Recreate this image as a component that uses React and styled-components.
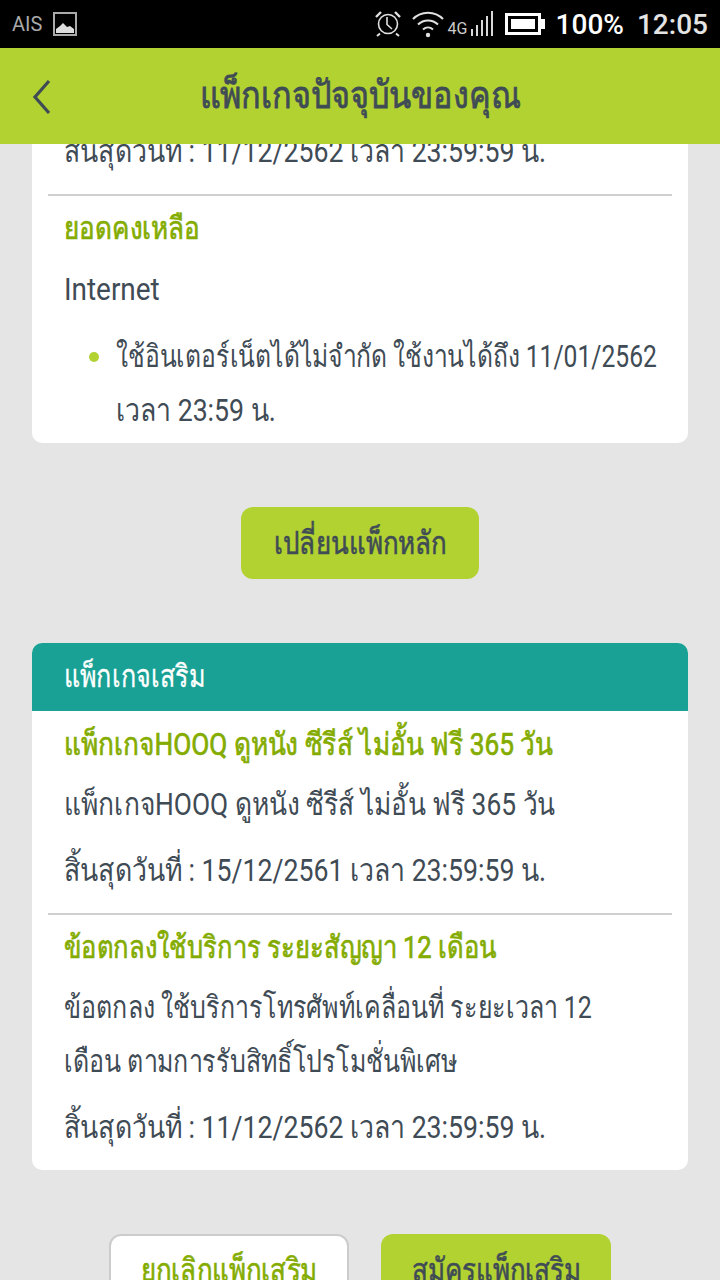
import React from 'react'
import styled, { createGlobalStyle } from 'styled-components'

const Global = createGlobalStyle`
  html, body { margin: 0; padding: 0; background: #e5e5e5; }
  body { font-family: Roboto, "Noto Sans", sans-serif; }
`

const AlarmIcon = () => (
  <svg width="28" height="26" viewBox="0 0 28 26" fill="none" stroke="#e0e0e0" strokeWidth="1.6">
    <circle cx="14" cy="13" r="9.500" />
    <path d="M13 6v7.500l5 4.500" />
    <path d="M2 6l5-5M26 6l-5-5" strokeWidth="2.400" />
    <path d="M3 25l3-2.500M25 25l-3-2.500" strokeWidth="2" />
  </svg>
)

const WifiIcon = () => (
  <svg width="32" height="27" viewBox="0 0 32 27" fill="none" stroke="#e0e0e0" strokeWidth="2">
    <path d="M1 8c8-8.500 22-8.500 30 0" />
    <path d="M6 13.500c5.500-5.500 14.500-5.500 20 0" />
    <path d="M11 18.500c3-2.800 7-2.800 10 0" />
    <circle cx="16" cy="24" r="2.200" fill="#e0e0e0" stroke="none" />
  </svg>
)

const SignalIcon = () => (
  <svg width="23" height="26" viewBox="0 0 23 26" fill="#d8d8d8">
    <rect x="0" y="18" width="2" height="7" />
    <rect x="5" y="14" width="2" height="11" />
    <rect x="10" y="9" width="2" height="16" />
    <rect x="15" y="5" width="2" height="20" />
    <rect x="20" y="0" width="2" height="25" />
  </svg>
)

const BatteryIcon = () => (
  <svg width="40" height="22" viewBox="0 0 40 22">
    <rect x="1.500" y="1.500" width="33" height="19" fill="none" stroke="#fff" strokeWidth="3" />
    <rect x="6" y="6" width="24" height="10" fill="#fff" />
    <rect x="36" y="6" width="4" height="10" fill="#fff" />
  </svg>
)

const PictureIcon = () => (
  <svg width="24" height="24" viewBox="0 0 24 24">
    <rect x="1" y="1" width="22" height="22" fill="none" stroke="#aaa" strokeWidth="2" />
    <path d="M3 21v-4l4-3 3-3 4 4 3-1 4 3v4z" fill="#ddd" />
  </svg>
)

const BackIcon = () => (
  <svg width="20" height="36" viewBox="0 0 20 36" fill="none" stroke="#3f4b55" strokeWidth="3.200">
    <path d="M17 2L3 18l14 16" />
  </svg>
)

const App = () => (
  <Page>
    <Global />
    <StatusBar>
      <Carrier>AIS</Carrier>
      <PictureIcon />
      <StatusRight>
        <AlarmIcon />
        <WifiIcon />
        <Network>4G</Network>
        <SignalIcon />
        <BatteryIcon />
        <Percent>100%</Percent>
        <Clock>12:05</Clock>
      </StatusRight>
    </StatusBar>
    <Header>
      <BackButton><BackIcon /></BackButton>
      <Title>แพ็กเกจปัจจุบันของคุณ</Title>
    </Header>
    <Scroller>
      <TopCard>
        <Item>
          <Line>สิ้นสุดวันที่ : 11/12/2562 เวลา 23:59:59 น.</Line>
        </Item>
        <Divider />
        <Item>
          <GreenTitle $scale={0.84}>ยอดคงเหลือ</GreenTitle>
          <Plain $scale={0.9}>Internet</Plain>
          <BulletRow>
            <Dot />
            <div>
              <Desc $scale={0.795}>ใช้อินเตอร์เน็ตได้ไม่จำกัด ใช้งานได้ถึง 11/01/2562</Desc>
              <Desc $scale={0.86}>เวลา 23:59 น.</Desc>
            </div>
          </BulletRow>
        </Item>
      </TopCard>
      <ButtonRow>
        <Action $wide><ButtonText>เปลี่ยนแพ็กหลัก</ButtonText></Action>
      </ButtonRow>
      <Card>
        <CardHead><HeadText $scale={0.81}>แพ็กเกจเสริม</HeadText></CardHead>
        <Item>
          <GreenTitle $scale={0.846}>แพ็กเกจHOOQ ดูหนัง ซีรีส์ ไม่อั้น ฟรี 365 วัน</GreenTitle>
          <Desc $scale={0.85}>แพ็กเกจHOOQ ดูหนัง ซีรีส์ ไม่อั้น ฟรี 365 วัน</Desc>
          <Line>สิ้นสุดวันที่ : 15/12/2561 เวลา 23:59:59 น.</Line>
        </Item>
        <Divider />
        <Item>
          <GreenTitle $scale={0.824}>ข้อตกลงใช้บริการ ระยะสัญญา 12 เดือน</GreenTitle>
          <Desc $scale={0.806}>ข้อตกลง ใช้บริการโทรศัพท์เคลื่อนที่ ระยะเวลา 12</Desc>
          <Desc $scale={0.806}>เดือน ตามการรับสิทธิ์โปรโมชั่นพิเศษ</Desc>
          <Line>สิ้นสุดวันที่ : 11/12/2562 เวลา 23:59:59 น.</Line>
        </Item>
      </Card>
      <ButtonRow>
        <Outline><ButtonText>ยกเลิกแพ็กเสริม</ButtonText></Outline>
        <Action><ButtonText>สมัครแพ็กเสริม</ButtonText></Action>
      </ButtonRow>
    </Scroller>
  </Page>
)

export default App

const Page = styled.div`
  width: 720px;
  height: 1280px;
  overflow: hidden;
  display: flex;
  flex-direction: column;
  background: #e5e5e5;
  color: #3f4b55;
`
const StatusBar = styled.div`
  height: 48px;
  flex: none;
  background: #000;
  display: flex;
  align-items: center;
  padding: 0 12px;
  gap: 11px;
`
const Carrier = styled.span`
  color: #aaa;
  font-size: 20px;
`
const StatusRight = styled.div`
  margin-left: auto;
  display: flex;
  align-items: center;
  color: #e8e8e8;
  svg + svg { margin-left: 10px; }
  svg:nth-of-type(4) { margin-left: 11px; }
  svg:nth-of-type(3) { margin-left: 0; }
`
const Network = styled.span`
  font-size: 16px;
  width: 21px;
  margin: 8px 2px 0 4px;
  color: #ccc;
`
const Percent = styled.span`
  font-size: 28px;
  font-weight: 500;
  margin-left: 11px;
  color: #fff;
`
const Clock = styled.span`
  font-size: 28px;
  font-weight: 500;
  margin-left: 13px;
  color: #e4e4e4;
`
const Header = styled.div`
  height: 96px;
  box-sizing: border-box;
  padding-bottom: 4px;
  flex: none;
  background: #b1d231;
  display: flex;
  align-items: center;
  justify-content: center;
  position: relative;
  z-index: 1;
`
const BackButton = styled.div`
  position: absolute;
  left: 32px;
  top: 31px;
`
const Title = styled.div`
  font-size: 38px;
  -webkit-text-stroke: 0.8px #3f4b55;
  transform: scaleX(0.853);
  white-space: nowrap;
`
const Scroller = styled.div`
  flex: 1;
  overflow: hidden;
`
const Card = styled.div`
  margin: 0 32px;
  background: #fff;
  border-radius: 10px;
  overflow: hidden;
  padding-bottom: 15px;
`
const TopCard = styled(Card)`
  margin-top: -31px;
  padding-bottom: 5px;
`
const CardHead = styled.div`
  height: 68px;
  margin-bottom: 1px;
  background: #18a194;
  display: flex;
  align-items: center;
  padding-left: 32px;
`
const Item = styled.div`
  padding: 0 32px 15px;
  &:last-child { padding-bottom: 0; }
`
const Divider = styled.div`
  height: 2px;
  background: #cfcfcf;
  margin: 0 16px;
`
const Narrow = styled.div`
  font-size: 31px;
  white-space: nowrap;
  width: fit-content;
  transform: scaleX(${p => p.$scale || 0.86});
  transform-origin: left center;
`
const HeadText = styled(Narrow)`
  color: #fff;
  -webkit-text-stroke: 0.3px #fff;
  margin-top: -2px;
`
const GreenTitle = styled(Narrow)`
  color: #84ac00;
  -webkit-text-stroke: 0.7px #84ac00;
  line-height: 66px;
`
const Line = styled(Narrow)`
  line-height: 54px;
  margin-top: 12px;
`
const Plain = styled(Line)`
  margin-top: 1px;
`
const Desc = styled(Narrow)`
  line-height: 54px;
`
const BulletRow = styled.div`
  display: flex;
  align-items: flex-start;
  gap: 17px;
  margin-top: 13px;
  padding-left: 25px;
`
const Dot = styled.span`
  width: 10px;
  height: 10px;
  flex: none;
  margin-top: 22px;
  border-radius: 50%;
  background: #b1d231;
`
const ButtonRow = styled.div`
  display: flex;
  justify-content: center;
  gap: 32px;
  padding: 64px 0;
`
const Action = styled.div`
  height: 72px;
  width: ${p => (p.$wide ? '238px' : '230px')};
  box-sizing: border-box;
  background: #b1d231;
  border-radius: 12px;
  display: flex;
  align-items: center;
  justify-content: center;
`
const Outline = styled(Action)`
  width: 240px;
  background: #fff;
  border: 2px solid #ccc;
  color: #84ac00;
`
const ButtonText = styled.span`
  font-size: 32px;
  -webkit-text-stroke: 0.6px currentColor;
  transform: scaleX(0.81);
  white-space: nowrap;
  margin-top: -2px;
`
